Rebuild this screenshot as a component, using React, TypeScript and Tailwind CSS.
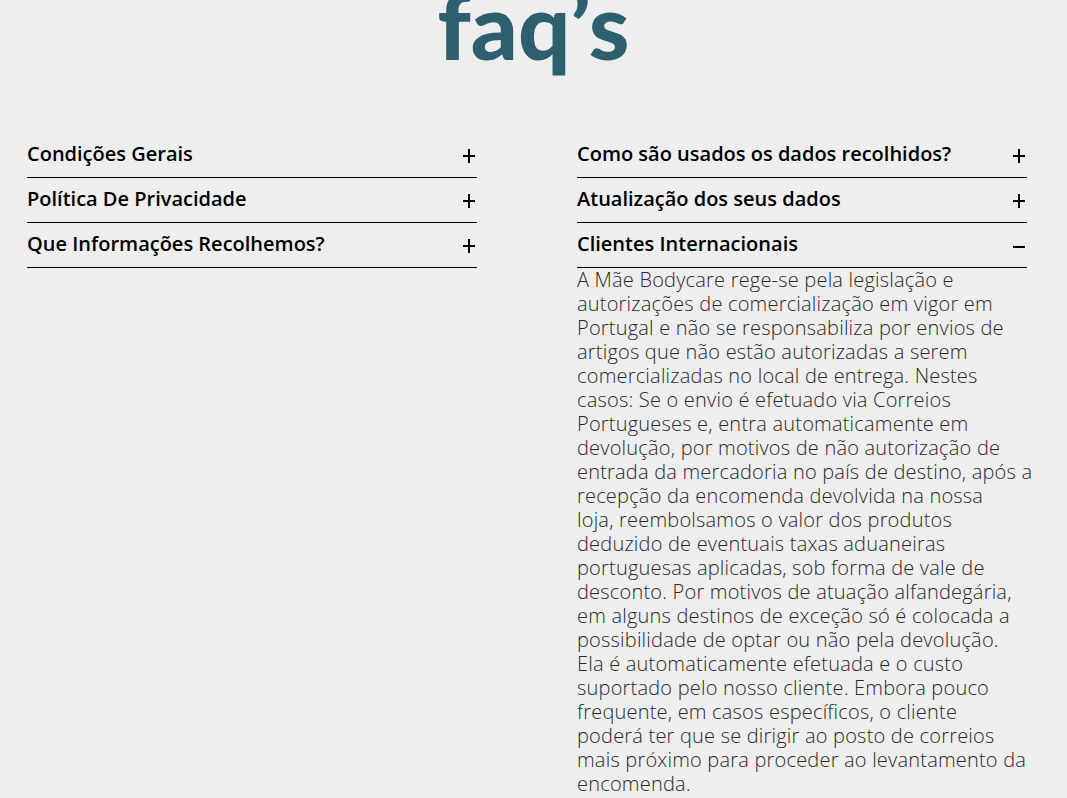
import React from 'react';

const left = ['Condições Gerais', 'Política De Privacidade', 'Que Informações Recolhemos?'];
const right = ['Como são usados os dados recolhidos?', 'Atualização dos seus dados'];

// lines kept as in the original layout
const bodyLines = [
  'A Mãe Bodycare rege-se pela legislação e',
  'autorizações de comercialização em vigor em',
  'Portugal e não se responsabiliza por envios de',
  'artigos que não estão autorizadas a serem',
  'comercializadas no local de entrega. Nestes',
  'casos: Se o envio é efetuado via Correios',
  'Portugueses e, entra automaticamente em',
  'devolução, por motivos de não autorização de',
  'entrada da mercadoria no país de destino, após a',
  'recepção da encomenda devolvida na nossa',
  'loja, reembolsamos o valor dos produtos',
  'deduzido de eventuais taxas aduaneiras',
  'portuguesas aplicadas, sob forma de vale de',
  'desconto. Por motivos de atuação alfandegária,',
  'em alguns destinos de exceção só é colocada a',
  'possibilidade de optar ou não pela devolução.',
  'Ela é automaticamente efetuada e o custo',
  'suportado pelo nosso cliente. Embora pouco',
  'frequente, em casos específicos, o cliente',
  'poderá ter que se dirigir ao posto de correios',
  'mais próximo para proceder ao levantamento da',
  'encomenda.',
];

const Toggle: React.FC<{ open?: boolean }> = ({ open }) => (
    <svg width="12" height="14" viewBox="0 0 12 14" className={open ? 'mr-[2px] mt-[4px]' : 'mr-[2px] mt-[2px]'}>
        <rect x="0" y="6" width="12" height="2" fill="#000" />
        {!open && <rect x="5" y="0" width="2" height="14" fill="#000" />}
    </svg>
);

const Row: React.FC<{ title: string; open?: boolean }> = ({ title, open }) => (
    <div className="flex h-[45px] items-center justify-between border-b border-black">
        <span className="mt-[-2px] text-[20px] font-semibold text-black">{title}</span>
        <Toggle open={open} />
    </div>
);

export default function App() {
    return (
        <div className="min-h-screen overflow-hidden bg-[#eeeeee] font-['Open_Sans',sans-serif]">
            {/* Title */}
            <h1 className="mt-[-30px] text-center font-['Lato',sans-serif] text-[92px] font-black leading-[110px] text-[#2e5f6e]">
                faq’s
            </h1>

            {/* Accordions */}
            <div className="mt-[43px] flex gap-[100px] px-[27px]">
                <div className="w-[450px] pt-[10px]">
                    {left.map((t) => (
                        <Row key={t} title={t} />
                    ))}
                </div>
                <div className="w-[450px] pt-[10px]">
                    {right.map((t) => (
                        <Row key={t} title={t} />
                    ))}
                    <Row title="Clientes Internacionais" open />
                    <p className="text-[20px] font-light leading-[24px] tracking-[0.2px] text-[#2a2a2a]">
                        {bodyLines.map((l) => (
                            <span key={l} className="block whitespace-nowrap">
                                {l}
                            </span>
                        ))}
                    </p>
                </div>
            </div>
        </div>
    );
}
